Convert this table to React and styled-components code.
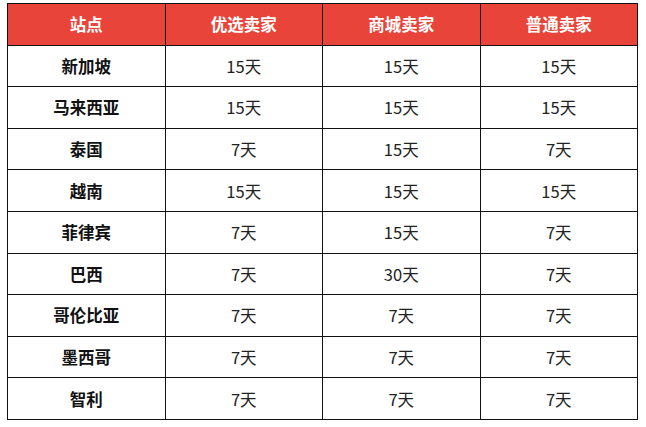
import React from "react";
import styled, { createGlobalStyle } from "styled-components";

const Global = createGlobalStyle`
  html, body { margin: 0; padding: 0; background: #ffffff; }
  body { font-family: "Noto Sans CJK SC", "Noto Sans", sans-serif; }
`;

const Page = styled.div`
  padding: 3px 0 0 7px;
`;

const Table = styled.table`
  border-collapse: collapse;
  width: 631px;
  table-layout: fixed;
  font-size: 16.5px;
`;

const HeadCell = styled.th`
  background: #e8443a;
  color: #ffffff;
  font-weight: 700;
  height: 40.6px;
  padding: 0;
  border: 1px solid #111;
  text-align: center;
  vertical-align: middle;
`;

const Cell = styled.td`
  height: 40.6px;
  padding: 0;
  border: 1px solid #111;
  text-align: center;
  vertical-align: middle;
  color: ${(p) => (p.$bold ? "#111" : "#222")};
  font-weight: ${(p) => (p.$bold ? 700 : 400)};
`;

const headers = ["站点", "优选卖家", "商城卖家", "普通卖家"];
const rows = [
  ["新加坡", "15天", "15天", "15天"],
  ["马来西亚", "15天", "15天", "15天"],
  ["泰国", "7天", "15天", "7天"],
  ["越南", "15天", "15天", "15天"],
  ["菲律宾", "7天", "15天", "7天"],
  ["巴西", "7天", "30天", "7天"],
  ["哥伦比亚", "7天", "7天", "7天"],
  ["墨西哥", "7天", "7天", "7天"],
  ["智利", "7天", "7天", "7天"],
];

export default function App() {
  return (
    <>
      <Global />
      <Page>
        <Table>
          <thead>
            <tr>
              {headers.map((h) => (
                <HeadCell key={h}>{h}</HeadCell>
              ))}
            </tr>
          </thead>
          <tbody>
            {rows.map((r) => (
              <tr key={r[0]}>
                {r.map((c, i) => (
                  <Cell key={i} $bold={i === 0}>
                    {c}
                  </Cell>
                ))}
              </tr>
            ))}
          </tbody>
        </Table>
      </Page>
    </>
  );
}
